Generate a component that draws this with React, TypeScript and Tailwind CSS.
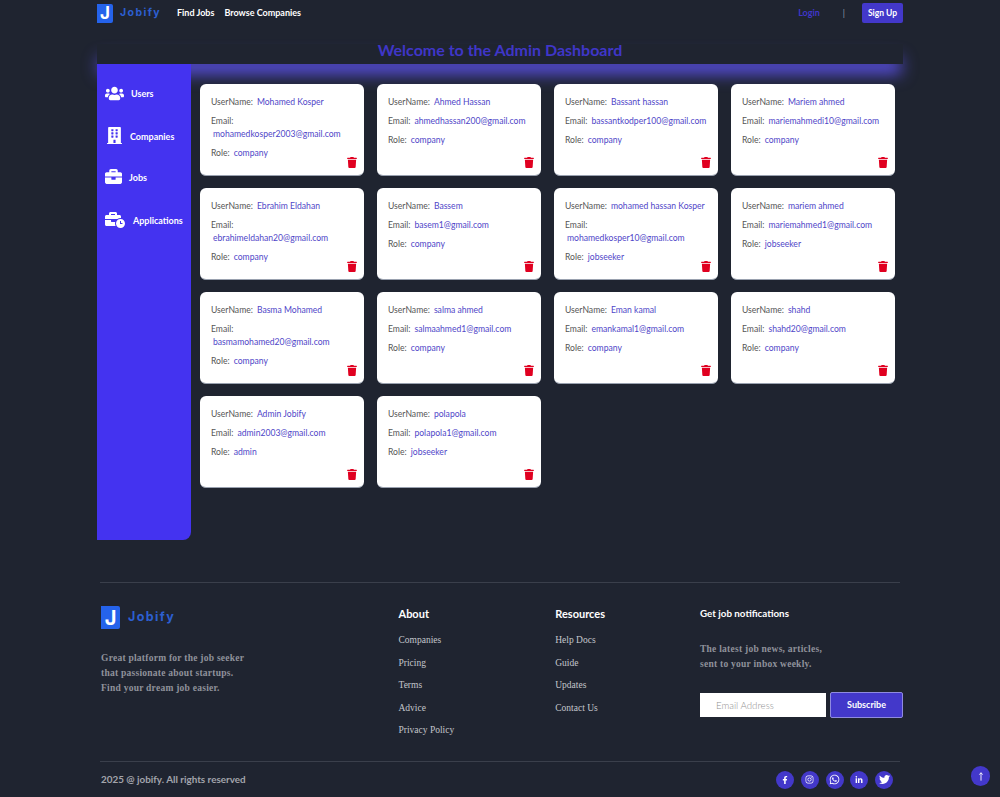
import { FaUsers, FaBuilding, FaBriefcase, FaBusinessTime, FaTrash, FaFacebookF, FaInstagram, FaWhatsapp, FaLinkedinIn, FaTwitter } from 'react-icons/fa';

const users = [
    { name: 'Mohamed Kosper', email: 'mohamedkosper2003@gmail.com', role: 'company', wrap: true },
    { name: 'Ahmed Hassan', email: 'ahmedhassan200@gmail.com', role: 'company' },
    { name: 'Bassant hassan', email: 'bassantkodper100@gmail.com', role: 'company' },
    { name: 'Mariem ahmed', email: 'mariemahmedi10@gmail.com', role: 'company' },
    { name: 'Ebrahim Eldahan', email: 'ebrahimeldahan20@gmail.com', role: 'company', wrap: true },
    { name: 'Bassem', email: 'basem1@gmail.com', role: 'company' },
    { name: 'mohamed hassan Kosper', email: 'mohamedkosper10@gmail.com', role: 'jobseeker', wrap: true },
    { name: 'mariem ahmed', email: 'mariemahmed1@gmail.com', role: 'jobseeker' },
    { name: 'Basma Mohamed', email: 'basmamohamed20@gmail.com', role: 'company', wrap: true },
    { name: 'salma ahmed', email: 'salmaahmed1@gmail.com', role: 'company' },
    { name: 'Eman kamal', email: 'emankamal1@gmail.com', role: 'company' },
    { name: 'shahd', email: 'shahd20@gmail.com', role: 'company' },
    { name: 'Admin Jobify', email: 'admin2003@gmail.com', role: 'admin' },
    { name: 'polapola', email: 'polapola1@gmail.com', role: 'jobseeker' },
];

const sideItems = [
    { label: 'Users', icon: <FaUsers className="w-[19px] h-[19px]" />, gap: 'gap-[7px]', h: 'h-[43px]' },
    { label: 'Companies', icon: <FaBuilding className="w-[15px] h-[17px] ml-[2px]" />, gap: 'gap-[8px]', h: 'h-[41px]' },
    { label: 'Jobs', icon: <FaBriefcase className="w-[17px] h-[17px]" />, gap: 'gap-[7px]', h: 'h-[43px]' },
    { label: 'Applications', icon: <FaBusinessTime className="w-[20px] h-[18px]" />, gap: 'gap-[8px]', h: 'h-[44px]' },
];

function Logo({ size }: { size: 'sm' | 'lg' }) {
    const box = size === 'sm' ? 'w-[16px] h-[19px] text-[17px]' : 'w-[19px] h-[23px] text-[20px]';
    const text = size === 'sm' ? 'text-[10.5px] ml-[7px] tracking-[1.4px]' : 'text-[12.5px] ml-[8px] tracking-[1.4px]';
    return (
        <div className="flex items-center">
            <div className={`${box} bg-[#2563eb] rounded-r-[2px] flex items-center justify-center text-white font-bold leading-none font-['Inter',sans-serif]`}>
                J
            </div>
            <span className={`${text} text-[#2c5fd0] font-bold font-['Inter',sans-serif]`}>Jobify</span>
        </div>
    );
}

function UserCard({ name, email, role, wrap }: { name: string; email: string; role: string; wrap?: boolean }) {
    return (
        <div className="relative h-[92px] bg-white rounded-[6px] border-b border-gray-400 pt-[12px] pl-[11px] text-[8.6px] leading-[13px] font-['Lato',sans-serif]">
            <div className="text-[#555] whitespace-nowrap">
                UserName:<span className="ml-[4px] text-[#4f46c8]">{name}</span>
            </div>
            <div className="mt-[6px] text-[#555] whitespace-nowrap">
                Email:
                {wrap ? (
                    <div className="ml-[2px] text-[#4f46c8]">{email}</div>
                ) : (
                    <span className="ml-[4px] text-[#4f46c8]">{email}</span>
                )}
            </div>
            <div className="mt-[6px] text-[#555]">
                Role:<span className="ml-[4px] text-[#4f46c8]">{role}</span>
            </div>
            <FaTrash className="absolute right-[7px] bottom-[7px] w-[10px] h-[11px] text-[#e00020]" />
        </div>
    );
}

function FooterList({ title, items, className }: { title: string; items: string[]; className: string }) {
    return (
        <div className={className}>
            <div className="pt-[1px] text-white text-[11px] font-bold leading-[14px] font-['Lato',sans-serif]">{title}</div>
            <div className="mt-[12px] flex flex-col gap-[8.5px]">
                {items.map((item) => (
                    <div key={item} className="text-[#c4c6cc] text-[9.5px] leading-[14px] font-['Liberation_Serif',serif]">
                        {item}
                    </div>
                ))}
            </div>
        </div>
    );
}

export default function App() {
    return (
        <div className="w-[1000px] h-[797px] overflow-hidden bg-[#1f2430] relative font-['Lato',sans-serif]">
            <div className="mx-[97px] w-[806px]">
                {/* navbar */}
                <nav className="h-[26px] flex items-center">
                    <Logo size="sm" />
                    <div className="ml-[16px] flex gap-[10px] text-white text-[9px] font-bold">
                        <span>Find Jobs</span>
                        <span>Browse Companies</span>
                    </div>
                    <div className="ml-auto flex items-center">
                        <span className="text-[#3f36c8] text-[9px] font-bold">Login</span>
                        <span className="ml-[23px] text-gray-400 text-[8.5px]">|</span>
                        <span className="ml-[17px] w-[41px] h-[20px] rounded-[2px] bg-[#4338ca] text-white text-[8.5px] font-bold flex items-center justify-center">
                            Sign Up
                        </span>
                    </div>
                </nav>

                <h1 className="mt-[18px] h-[20px] text-center text-[#3f36c8] text-[16px] font-bold leading-[12px] bg-[#1f2430] shadow-[0_12px_16px_-2px_#5a50e4]">
                    Welcome to the Admin Dashboard
                </h1>

                <div className="flex relative">
                    <aside className="w-[94px] h-[476px] bg-[#4433f0] rounded-br-[8px] pt-[20px] pl-[8px] text-white">
                        {sideItems.map((item) => (
                            <div key={item.label} className={`${item.h} flex items-start ${item.gap}`}>
                                {item.icon}
                                <span className="text-[9px] font-bold leading-[19px]">{item.label}</span>
                            </div>
                        ))}
                    </aside>
                    <main className="mt-[20px] ml-[9px] w-[695px] grid grid-cols-4 gap-x-[13px] gap-y-[12px] content-start">
                        {users.map((u) => (
                            <UserCard key={u.email} {...u} />
                        ))}
                    </main>
                </div>

                {/* footer */}
                <footer className="ml-[3px] w-[803px] mt-[42px]">
                    <div className="w-[800px] border-t border-[#3a3f4b]" />
                    <div className="h-[178px] flex pt-[23px]">
                        <div className="w-[299px] pl-[1px]">
                            <Logo size="lg" />
                            <p className="mt-[22px] text-[#8f929b] text-[9.5px] font-bold leading-[15px] tracking-[0.25px] font-['Liberation_Serif',serif]">
                                Great platform for the job seeker
                                <br />
                                that passionate about startups.
                                <br />
                                Find your dream job easier.
                            </p>
                        </div>
                        <FooterList
                            className="w-[157px]"
                            title="About"
                            items={['Companies', 'Pricing', 'Terms', 'Advice', 'Privacy Policy']}
                        />
                        <FooterList
                            className="w-[144px]"
                            title="Resources"
                            items={['Help Docs', 'Guide', 'Updates', 'Contact Us']}
                        />
                        <div className="w-[204px] pl-[1px]">
                            <div className="text-white text-[9.8px] font-bold leading-[14px]">Get job notifications</div>
                            <p className="mt-[22px] text-[#8f929b] text-[9.5px] font-bold leading-[15px] tracking-[0.25px] font-['Liberation_Serif',serif]">
                                The latest job news, articles,
                                <br />
                                sent to your inbox weekly.
                            </p>
                            <div className="mt-[20px] flex items-center">
                                <div className="w-[126px] h-[24px] bg-white pl-[16px] text-[#909090] text-[9.7px] leading-[24px] font-light font-['Lato',sans-serif]">
                                    Email Address
                                </div>
                                <div className="ml-[4px] w-[73px] h-[26px] bg-[#4338ca] border border-[#8f8ae0] rounded-[2px] text-white text-[9px] font-bold flex items-center justify-center">
                                    Subscribe
                                </div>
                            </div>
                        </div>
                    </div>
                    <div className="w-[800px] border-t border-[#3a3f4b] h-[36px] flex items-center justify-between pl-[1px] pr-[7px]">
                        <span className="text-[#a3a5ac] text-[9.9px] font-bold">2025 @ jobify. All rights reserved</span>
                        <div className="flex gap-[6.7px] text-white">
                            <span className="w-[18px] h-[18px] rounded-full bg-[#4338ca] flex items-center justify-center"><FaFacebookF className="w-[8px] h-[8px]" /></span>
                            <span className="w-[18px] h-[18px] rounded-full bg-[#4338ca] flex items-center justify-center"><FaInstagram className="w-[9px] h-[9px]" /></span>
                            <span className="w-[18px] h-[18px] rounded-full bg-[#4338ca] flex items-center justify-center"><FaWhatsapp className="w-[11px] h-[11px]" /></span>
                            <span className="w-[18px] h-[18px] rounded-full bg-[#4338ca] flex items-center justify-center"><FaLinkedinIn className="w-[8px] h-[8px]" /></span>
                            <span className="w-[18px] h-[18px] rounded-full bg-[#4338ca] flex items-center justify-center"><FaTwitter className="w-[11px] h-[11px]" /></span>
                        </div>
                    </div>
                </footer>
            </div>

            {/* back to top */}
            <div className="absolute left-[971px] top-[766px] w-[19px] h-[20px] rounded-full bg-[#4338ca] flex items-center justify-center">
                <svg viewBox="0 0 8 12" className="w-[6px] h-[9px]" fill="none" stroke="white" strokeWidth="1.2">
                    <path d="M4 11.5V1M1.8 3.5 4 1l2.2 2.5" />
                </svg>
            </div>
        </div>
    );
}
